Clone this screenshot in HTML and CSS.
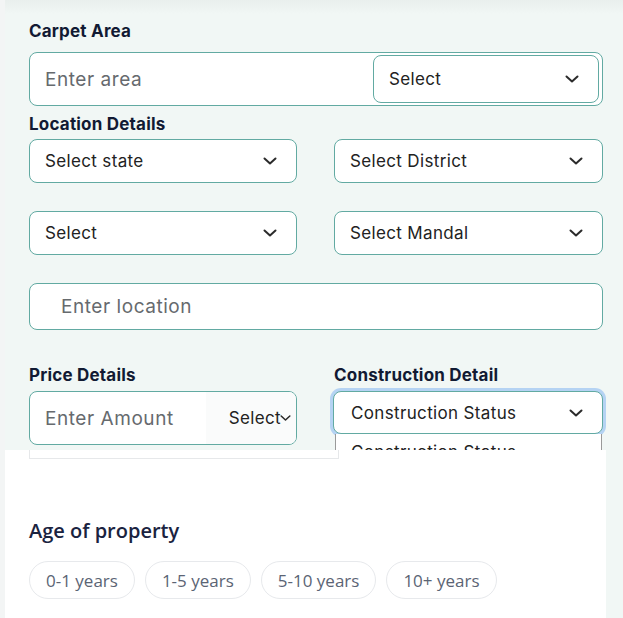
FILE: index.html
```html
<!DOCTYPE html>
<html lang="en">
<head>
<meta charset="utf-8">
<title>Property filters</title>
<link rel="stylesheet" href="styles.css">
</head>
<body>
<div class="main">
  <section class="form">
    <div class="label">Carpet Area</div>
    <div class="area-box">
      <span class="ph">Enter area</span>
      <div class="inner-select">
        <span>Select</span>
        <svg class="chev" viewBox="0 0 14 8"><polyline points="1.5,1.5 7,6.5 12.5,1.5"/></svg>
      </div>
    </div>

    <div class="label loc-label">Location Details</div>
    <div class="grid">
      <div class="select"><span>Select state</span><svg class="chev" viewBox="0 0 14 8"><polyline points="1.5,1.5 7,6.5 12.5,1.5"/></svg></div>
      <div class="select"><span>Select District</span><svg class="chev" viewBox="0 0 14 8"><polyline points="1.5,1.5 7,6.5 12.5,1.5"/></svg></div>
      <div class="select"><span>Select</span><svg class="chev" viewBox="0 0 14 8"><polyline points="1.5,1.5 7,6.5 12.5,1.5"/></svg></div>
      <div class="select"><span>Select Mandal</span><svg class="chev" viewBox="0 0 14 8"><polyline points="1.5,1.5 7,6.5 12.5,1.5"/></svg></div>
    </div>
    <div class="location"><span class="ph">Enter location</span></div>

    <div class="grid bottom">
      <div class="col">
        <div class="label">Price Details</div>
        <div class="price-box">
          <span class="ph">Enter Amount</span>
          <div class="unit"><span>Select</span><svg class="chev tight" viewBox="0 0 14 8"><polyline points="1.5,1.5 7,6.5 12.5,1.5"/></svg></div>
        </div>
      </div>
      <div class="col construct">
        <div class="label">Construction Detail</div>
        <div class="select focused"><span>Construction Status</span><svg class="chev" viewBox="0 0 14 8"><polyline points="1.5,1.5 7,6.5 12.5,1.5"/></svg></div>
        <div class="options"><div class="option">Construction Status</div></div>
      </div>
    </div>
  </section>

  <section class="panel">
    <div class="stub"></div>
    <h3 class="age-title">Age of property</h3>
    <div class="chips">
      <span class="chip">0-1 years</span>
      <span class="chip">1-5 years</span>
      <span class="chip">5-10 years</span>
      <span class="chip">10+ years</span>
    </div>
  </section>
</div>
</body>
</html>
```

FILE: styles.css
```css
* { box-sizing: border-box; }
html, body { margin: 0; padding: 0; }
body {
  background: #f3f5f5;
  width: 623px;
  height: 618px;
  overflow: hidden;
  font-family: "Inter", "Noto Sans", sans-serif;
}
.main {
  margin-left: 5px;
  background: linear-gradient(#e9efed 0px, #f1f7f5 14px, #f1f7f5 100%);
  height: 618px;
}
.form {
  height: 450px;
  overflow: hidden;
  padding: 21px 20px 0 24px;
}
.label {
  font-weight: 700;
  font-size: 17px;
  line-height: 20px;
  color: #111a33;
  letter-spacing: 0.2px;
}
.loc-label { margin-top: 8px; }
.ph {
  font-size: 19px;
  color: #666a6e;
  letter-spacing: 0.55px;
}
.chev {
  width: 14px;
  height: 8px;
  fill: none;
  stroke: #2b2b2b;
  stroke-width: 2;
  stroke-linecap: round;
  stroke-linejoin: round;
  flex-shrink: 0;
}
.area-box {
  margin-top: 11px;
  height: 54px;
  border: 1px solid #62aaa2;
  border-radius: 8px;
  background: #fff;
  display: flex;
  align-items: center;
  padding: 0 3px 0 15px;
}
.area-box .ph { flex: 1; }
.inner-select {
  width: 226px;
  height: 48px;
  border: 1px solid #62aaa2;
  border-radius: 8px;
  display: flex;
  align-items: center;
  justify-content: space-between;
  padding: 0 19px 0 15px;
  font-size: 17px;
  letter-spacing: 0.35px;
  color: #222;
}
.grid {
  display: grid;
  grid-template-columns: 268px 269px;
  column-gap: 37px;
  row-gap: 28px;
  margin-top: 5px;
}
.select {
  height: 44px;
  border: 1px solid #62aaa2;
  border-radius: 8px;
  background: #fff;
  display: flex;
  align-items: center;
  justify-content: space-between;
  padding: 0 19px 0 15px;
  font-size: 17px;
  color: #222;
  letter-spacing: 0.35px;
}
.location {
  margin-top: 28px;
  height: 47px;
  border: 1px solid #62aaa2;
  border-radius: 8px;
  background: #fff;
  display: flex;
  align-items: center;
  padding-left: 31px;
}
.bottom { margin-top: 35px; }
.bottom .label { margin-bottom: 6px; }
.price-box {
  height: 54px;
  border: 1px solid #62aaa2;
  border-radius: 8px;
  background: #fff;
  display: flex;
  align-items: center;
  overflow: hidden;
}
.price-box .ph { flex: 1; padding-left: 15px; white-space: nowrap; }
.unit {
  width: 90px;
  height: 100%;
  background: #fafbfb;
  display: flex;
  align-items: center;
  justify-content: flex-end;
  padding-right: 5px;
  font-size: 17px;
  letter-spacing: 0.35px;
  color: #222;
}
.chev.tight { width: 11px; margin-left: -1px; }
.construct {
  position: relative;
  margin-left: -1px;
}
.construct .label { margin-left: 1px; }
.select.focused {
  height: 43px;
  box-shadow: 0 0 0 3px #b5d3f3;
  padding-left: 17px;
}
.options {
  position: absolute;
  top: 69px;
  left: 2px;
  right: 1px;
  height: 60px;
  background: #fff;
  border: 1px solid #9a9a9a;
  border-top: none;
}
.option {
  padding: 8px 0 0 15px;
  font-size: 17px;
  letter-spacing: 0.35px;
  line-height: 20px;
  color: #222;
}
.panel {
  width: 601px;
  height: 168px;
  background: #fff;
  padding-left: 24px;
  font-family: "Open Sans", sans-serif;
}
.stub {
  width: 310px;
  height: 9px;
  border: 1px solid #e6e8ea;
  border-top: none;
}
.age-title {
  margin: 58px 0 0 0;
  font-size: 20px;
  line-height: 28px;
  font-weight: 600;
  color: #1a2340;
}
.chips {
  margin-top: 16px;
  display: flex;
  gap: 10px;
}
.chip {
  height: 38px;
  padding: 0 16px;
  border: 1px solid #e7e9ec;
  border-radius: 19px;
  display: flex;
  align-items: center;
  font-size: 17px;
  color: #5b6474;
}
```
